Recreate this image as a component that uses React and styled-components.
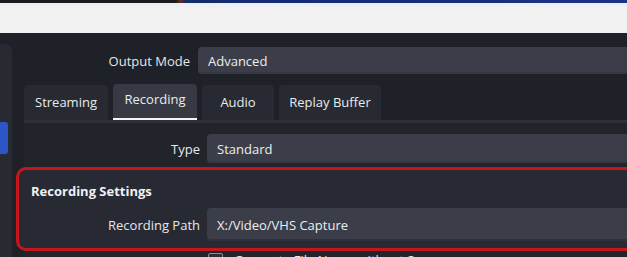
import React from 'react'
import styled, { createGlobalStyle } from 'styled-components'

const GlobalStyle = createGlobalStyle`
    html, body {
        margin: 0;
        padding: 0;
        background: #1f2128;
        overflow: hidden;
    }
    body {
        font-family: "Open Sans", "Noto Sans", sans-serif;
        font-size: 13px;
        color: #e8e9ec;
    }
`

const tabs = [
    { name: 'Streaming', width: 84 },
    { name: 'Recording', width: 84 },
    { name: 'Audio', width: 72 },
    { name: 'Replay Buffer', width: 102 },
]

const App = () => {
    return (
        <Page>
            <GlobalStyle/>
            <TopStrip/>
            <LightBand/>
            <Main>
                <Sidebar>
                    <SideMarker/>
                </Sidebar>
                <Content>
                    <FormRow labelWidth={178} gap={8}>
                        <Label>Output Mode</Label>
                        <Field height={27}>Advanced</Field>
                    </FormRow>
                    <TabBar>
                        {tabs.map((tab) => (
                            <Tab key={tab.name} width={tab.width} active={tab.name === 'Recording'}>{tab.name}</Tab>
                        ))}
                    </TabBar>
                    <TabPage>
                        <FormRow labelWidth={176} gap={7}>
                            <Label>Type</Label>
                            <Field height={29}>Standard</Field>
                        </FormRow>
                        <GroupBox>
                            <GroupTitle>Recording Settings</GroupTitle>
                            <FormRow labelWidth={169} gap={7}>
                                <Label>Recording Path</Label>
                                <Field height={33} inset>X:/Video/VHS Capture</Field>
                            </FormRow>
                        </GroupBox>
                        <CheckRow>
                            <CheckBox/>
                            <span>Generate File Name without Space</span>
                        </CheckRow>
                    </TabPage>
                </Content>
            </Main>
        </Page>
    )
}

const Page = styled.div`
    width: 627px;
    height: 257px;
    overflow: hidden;
    display: flex;
    flex-direction: column;
`

const TopStrip = styled.div`
    flex-shrink: 0;
    height: 3px;
    background: linear-gradient(90deg, #1c1c1e 0, #1c1c1e 176px, #6b2a14 180px, #132a6e 186px, #1a3485 100%);
`

const LightBand = styled.div`
    flex-shrink: 0;
    height: 30px;
    background: linear-gradient(180deg, #e9eef6 0, #f2f2f2 6px, #f2f2f2 100%);
`

const Main = styled.div`
    flex-shrink: 0;
    display: flex;
    background: #1f2128;
`

const Sidebar = styled.div`
    flex-shrink: 0;
    width: 12px;
    margin-top: 11px;
    background: #272a32;
    border-top-right-radius: 6px;
    position: relative;
`

const SideMarker = styled.div`
    position: absolute;
    left: 0;
    top: 78px;
    width: 8px;
    height: 32px;
    background: #2c56c8;
    border-radius: 0 3px 3px 0;
`

const Content = styled.div`
    flex: 1;
    display: flex;
    flex-direction: column;
    padding-top: 14px;
`

const FormRow = styled.div`
    display: grid;
    grid-template-columns: ${({labelWidth}) => labelWidth}px 1fr;
    column-gap: ${({gap}) => gap}px;
    align-items: center;
`

const Label = styled.div`
    text-align: right;
    color: #e6e7ea;
`

const Field = styled.div`
    height: ${({height}) => height}px;
    display: flex;
    align-items: center;
    padding-left: 10px;
    background: #3b3e48;
    border-radius: 4px 0 0 4px;
    margin-right: -10px;
    color: #eceef1;
    box-shadow: ${({inset}) => inset ? 'inset 0 -2px 0 #2f323b' : 'inset 0 -2px 0 #353841'};
`

const TabBar = styled.div`
    display: flex;
    gap: 5px;
    margin: 10px 0 0 12px;
    height: 36px;
`

const Tab = styled.div`
    flex-shrink: 0;
    width: ${({width}) => width}px;
    display: flex;
    align-items: center;
    justify-content: center;
    white-space: nowrap;
    box-sizing: border-box;
    background: ${({active}) => active ? '#373a44' : '#272a32'};
    border-radius: 4px 4px 0 0;
    color: #e9eaed;
    border-bottom: 2px solid ${({active}) => active ? '#f4f4f6' : 'transparent'};
    padding-bottom: ${({active}) => active ? 4 : 0}px;
    margin-top: ${({active}) => active ? 0 : 1}px;
`

const TabPage = styled.div`
    margin-left: 12px;
    border-top: 3px solid #2c2f38;
    padding-top: 11px;
    display: flex;
    flex-direction: column;
    background: #22242c;
`

const GroupBox = styled.div`
    margin: 4px -20px 0 -8px;
    border: 3px solid #c5161d;
    border-radius: 10px;
    padding: 12px 0 7px 12px;
    background: #272a33;
`

const GroupTitle = styled.div`
    font-weight: 700;
    color: #f0f1f3;
    margin-bottom: 8px;
`

const CheckRow = styled.div`
    display: flex;
    align-items: flex-start;
    gap: 11px;
    margin: 1px 0 0 184px;
    color: #e6e7ea;
    line-height: 16px;
`

const CheckBox = styled.div`
    width: 13px;
    height: 13px;
    margin-top: 1px;
    border: 1px solid #8d909a;
    border-radius: 2px;
    background: #2b2e37;
`

export default App
